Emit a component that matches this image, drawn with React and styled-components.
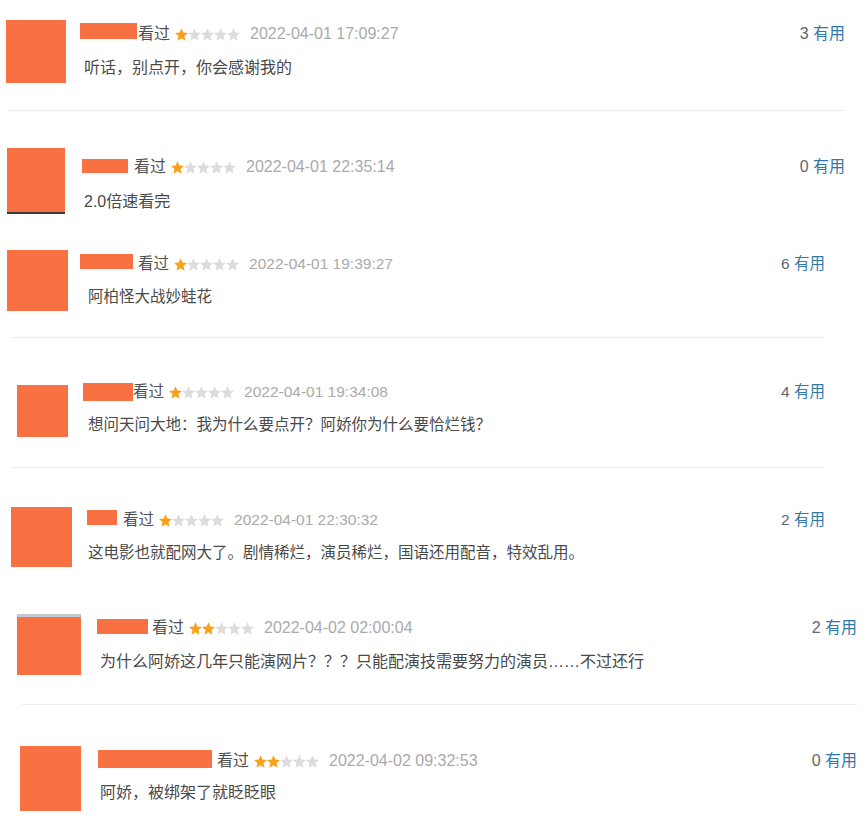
import React from 'react';
import styled, { createGlobalStyle } from 'styled-components';

const GlobalStyle = createGlobalStyle`
  html, body {
    margin: 0;
    background: #fff;
  }
  body {
    font-family: "Liberation Sans", "Noto Sans CJK SC", Arial, sans-serif;
  }
`

const Page = styled.main`
  width: 868px;
  height: 820px;
  overflow: hidden;
  display: flex;
  flex-direction: column;
`

const Row = styled.article`
  flex: none;
  display: flex;
  align-items: flex-start;
  box-sizing: border-box;
  margin: ${p => p.$mt}px 0 0 ${p => p.$left}px;
  width: ${p => p.$right - p.$left}px;
  font-size: ${p => p.$fs}px;
`

const Avatar = styled.div`
  flex: none;
  width: ${p => p.$w}px;
  height: ${p => p.$h}px;
  margin-top: ${p => p.$mt || 0}px;
  background: #f97142;
  box-shadow: ${p => p.$edge || 'none'};
`

const Body = styled.div`
  flex: 1;
  min-width: 0;
  margin-left: ${p => p.$gap}px;
  padding-top: ${p => p.$top}px;
`

const Header = styled.div`
  display: flex;
  align-items: flex-start;
  height: 20px;
  line-height: 20px;
  white-space: nowrap;
`

const NameMask = styled.span`
  flex: none;
  width: ${p => p.$w}px;
  height: ${p => p.$h}px;
  margin: ${p => p.$mt}px ${p => p.$gap}px 0 ${p => p.$off}px;
  background: #f97142;
`

const Watched = styled.span`
  color: #4f4f4f;
  margin-right: 5px;
`

const Stars = styled.span`
  display: flex;
  align-self: center;
  margin-right: 10px;
`

const Time = styled.span`
  color: #aaa;
`

const Votes = styled.span`
  margin-left: auto;
  color: #666;
`

const Useful = styled.a`
  color: #37a;
  text-decoration: none;
`

const Text = styled.p`
  margin: ${p => p.$mt}px 0 0;
  line-height: 20px;
  color: #494949;
  white-space: nowrap;
`

const Rule = styled.hr`
  flex: none;
  border: 0;
  height: 1px;
  background: #ededed;
  margin: ${p => p.$mt}px 0 0 ${p => p.$left}px;
  width: ${p => p.$right - p.$left}px;
`

const STAR = '6.5,0.3 8.35,4.6 13,5 9.5,8.1 10.55,12.8 6.5,10.35 2.45,12.8 3.5,8.1 0,5 4.65,4.6';

function Rating({ value }) {
  return (
    <Stars>
      {[0, 1, 2, 3, 4].map(i => (
        <svg key={i} width="13" height="13" viewBox="0 0 13 13">
          <polygon points={STAR} fill={i < value ? '#f9a11b' : '#dcdcdc'} />
        </svg>
      ))}
    </Stars>
  );
}

const comments = [
  {
    mt: 20, left: 6, right: 845, fs: 16,
    av: { w: 60, h: 63 }, gap: 18, top: 4,
    name: { off: -4, w: 57, h: 16, mt: -1, gap: 1 },
    stars: 1, time: '2022-04-01 17:09:27', text: '听话，别点开，你会感谢我的', textMt: 14, votes: 3,
    rule: { mt: 27, left: 7, right: 845 },
  },
  {
    mt: 37, left: 7, right: 845, fs: 16,
    av: { w: 58, h: 64, edge: '0 2px 0 #3a3a3a' }, gap: 19, top: 9,
    name: { off: -2, w: 46, h: 14, mt: 2, gap: 6 },
    stars: 1, time: '2022-04-01 22:35:14', text: '2.0倍速看完', textMt: 15, votes: 0,
  },
  {
    mt: 38, left: 7, right: 825, fs: 15.5,
    av: { w: 61, h: 61 }, gap: 20, top: 4,
    name: { off: -8, w: 53, h: 15, mt: 0, gap: 5 },
    stars: 1, time: '2022-04-01 19:39:27', text: '阿柏怪大战妙蛙花', textMt: 13, votes: 6,
    rule: { mt: 26, left: 12, right: 825 },
  },
  {
    mt: 44, left: 17, right: 825, fs: 15.5,
    av: { w: 51, h: 52, mt: 3 }, gap: 20, top: 0,
    name: { off: -5, w: 50, h: 18, mt: 1, gap: 0 },
    stars: 1, time: '2022-04-01 19:34:08', text: '想问天问大地：我为什么要点开？阿娇你为什么要恰烂钱？', textMt: 13, votes: 4,
    rule: { mt: 30, left: 12, right: 825 },
  },
  {
    mt: 39, left: 11, right: 825, fs: 15.5,
    av: { w: 61, h: 60 }, gap: 16, top: 3,
    name: { off: -1, w: 30, h: 15, mt: 0, gap: 6 },
    stars: 1, time: '2022-04-01 22:30:32', text: '这电影也就配网大了。剧情稀烂，演员稀烂，国语还用配音，特效乱用。', textMt: 13, votes: 2,
  },
  {
    mt: 50, left: 17, right: 857, fs: 16,
    av: { w: 64, h: 58, edge: '0 -3px 0 #c3c7cf' }, gap: 19, top: 1,
    name: { off: -3, w: 51, h: 15, mt: 1, gap: 4 },
    stars: 2, time: '2022-04-02 02:00:04', text: '为什么阿娇这几年只能演网片？？？只能配演技需要努力的演员……不过还行', textMt: 14, votes: 2,
    rule: { mt: 29, left: 22, right: 857 },
  },
  {
    mt: 41, left: 20, right: 857, fs: 16,
    av: { w: 61, h: 65 }, gap: 19, top: 5,
    name: { off: -2, w: 114, h: 18, mt: -1, gap: 5 },
    stars: 2, time: '2022-04-02 09:32:53', text: '阿娇，被绑架了就眨眨眼', textMt: 12, votes: 0,
  },
];

export default function App() {
  return (
    <>
      <GlobalStyle />
      <Page>
        {comments.map((c, i) => (
          <React.Fragment key={i}>
            <Row $mt={c.mt} $left={c.left} $right={c.right} $fs={c.fs}>
              <Avatar $w={c.av.w} $h={c.av.h} $mt={c.av.mt} $edge={c.av.edge} />
              <Body $gap={c.gap} $top={c.top}>
                <Header>
                  <NameMask $off={c.name.off} $w={c.name.w} $h={c.name.h} $mt={c.name.mt} $gap={c.name.gap} />
                  <Watched>看过</Watched>
                  <Rating value={c.stars} />
                  <Time>{c.time}</Time>
                  <Votes>{c.votes} <Useful href="#">有用</Useful></Votes>
                </Header>
                <Text $mt={c.textMt}>{c.text}</Text>
              </Body>
            </Row>
            {c.rule && <Rule $mt={c.rule.mt} $left={c.rule.left} $right={c.rule.right} />}
          </React.Fragment>
        ))}
      </Page>
    </>
  );
}
